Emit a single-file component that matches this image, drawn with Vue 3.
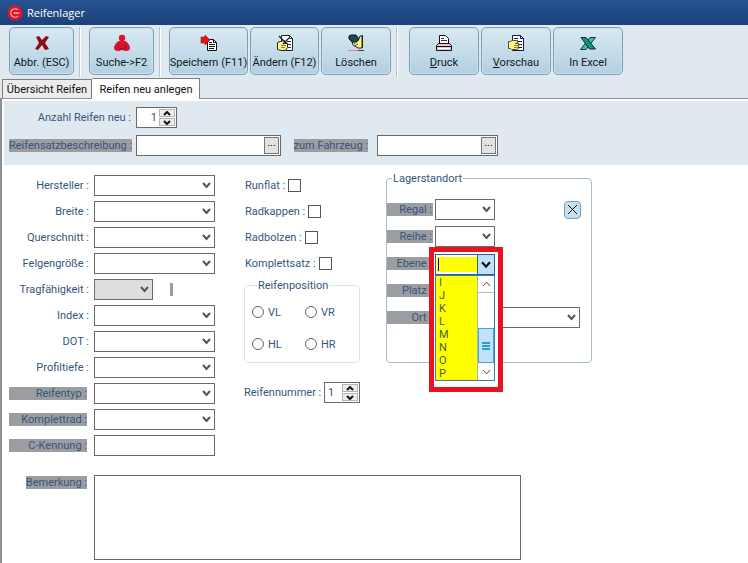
<script setup>
import { ref } from 'vue'

const specs = [
  { id: 'hersteller', label: 'Hersteller :' },
  { id: 'breite', label: 'Breite :' },
  { id: 'querschnitt', label: 'Querschnitt :' },
  { id: 'felge', label: 'Felgengröße :' },
  { id: 'tragfaehigkeit', label: 'Tragfähigkeit :', disabled: true },
  { id: 'index', label: 'Index :' },
  { id: 'dot', label: 'DOT :' },
  { id: 'profil', label: 'Profiltiefe :' },
  { id: 'typ', label: 'Reifentyp :', marked: true },
  { id: 'rad', label: 'Komplettrad :', marked: true },
  { id: 'kennung', label: 'C-Kennung :', marked: true, text: true },
]
const checks = [
  { id: 'runflat', label: 'Runflat :' },
  { id: 'kappen', label: 'Radkappen :' },
  { id: 'bolzen', label: 'Radbolzen :' },
  { id: 'satz', label: 'Komplettsatz :' },
]
const positions = ['VL', 'VR', 'HL', 'HR']
const levels = ['I', 'J', 'K', 'L', 'M', 'N', 'O', 'P']
const count = ref(1)
const tyre = ref(1)
const level = ref('')
</script>

<template>
  <div class="window">
    <header class="titlebar">
      <svg class="logo" width="16" height="16" viewBox="0 0 16 16">
        <circle cx="8" cy="8" r="7.6" fill="#e3122b" />
        <path d="M10.800 4.800A4.200 4.200 0 1 0 11 11M6.500 8h6.200" fill="none" stroke="#f7b5b5" stroke-width="1.300" />
      </svg>
      <h1>Reifenlager</h1>
    </header>

    <nav class="toolbar">
      <button class="tool small" type="button">
        <svg width="20" height="20" viewBox="0 0 20 20">
          <path d="M4 4l3-1 3 4 4-4 3 1-4 6 4 6-4 1-3-5-4 5-3-1 4-6z" fill="#8c0d14" />
        </svg>
        <span>Abbr. (ESC)</span>
      </button>
      <i class="rule"></i>
      <button class="tool small" type="button">
        <svg width="20" height="20" viewBox="0 0 20 20">
          <circle cx="10" cy="5" r="3.200" fill="#d9142b" />
          <path d="M7 8h6c3 1 5 5 5 7 0 3-4 4-8 2-4 2-8 1-8-2 0-2 2-6 5-7z" fill="#d9142b" />
          <path d="M6 12v2.500l4 1.500 4-1.500V12" fill="none" stroke="#7e1628" stroke-width="1" />
        </svg>
        <span>Suche-&gt;F2</span>
      </button>
      <i class="rule"></i>
      <div class="group">
        <button class="tool wide" type="button">
          <svg width="20" height="20" viewBox="0 0 20 20">
            <path d="M8.500 6.500h6l3 3v8h-9z" fill="#fff" stroke="#111" />
            <path d="M14.500 6.500v3h3M10 9.500h3M10 11.500h6M10 13.500h6M10 15.500h5" fill="none" stroke="#111" />
            <path d="M2 4h4V2l5 5-5 5v-2H2z" fill="#ee1010" stroke="#8e1010" stroke-width=".6" />
          </svg>
          <span>Speichern (F11)</span>
        </button>
        <button class="tool mid" type="button">
          <svg width="20" height="20" viewBox="0 0 20 20">
            <path d="M6.500 2.500h8l3 3v12h-11z" fill="#fff" stroke="#222" />
            <path d="M14.500 2.500v3h3M12 8.500h4M13 11.500h3M13 14.500h3" fill="none" stroke="#333" />
            <path d="M2.500 9.500l3-1 4-1 2 2-2 1h3v4l-2 3h-4l-4-1z" fill="#fbf58c" stroke="#222" />
            <path d="M4 3l7 7M14 5l-6 6" stroke="#222" stroke-width="1.400" />
            <path d="M6 12.500h5M6 14.500h4" stroke="#8b8529" />
          </svg>
          <span>Ändern (F12)</span>
        </button>
        <button class="tool norm" type="button">
          <svg width="20" height="20" viewBox="0 0 20 20">
            <path d="M6 9l6-1 2-5h2v12h-4l-5-3z" fill="#fbf58c" stroke="#222" />
            <path d="M3 3l2-1h5l3 4-4 3H6L3 6z" fill="#174e55" stroke="#111" />
            <path d="M8 11l3-2M9 13l3-2" stroke="#555" />
            <path d="M16.500 2v13" stroke="#222" />
            <path d="M2 17.500h10" stroke="#d48a91" />
            <path d="M12 17.500h6" stroke="#444" />
          </svg>
          <span>Löschen</span>
        </button>
      </div>
      <i class="rule"></i>
      <div class="group last">
        <button class="tool norm" type="button">
          <svg width="20" height="20" viewBox="0 0 20 20">
            <path d="M5.500 10.500v-8h6l3 3v5z" fill="#fff" stroke="#111" />
            <path d="M7 5.500h3M7 7.500h6" stroke="#333" />
            <path d="M4.500 10.500h11l2 2v5h-15v-5z" fill="#e7c6cf" stroke="#111" />
            <path d="M3 13.500h14" stroke="#111" /><path d="M4 15.500h12" stroke="#fff" />
          </svg>
          <span><u>D</u>ruck</span>
        </button>
        <button class="tool norm" type="button">
          <svg width="20" height="20" viewBox="0 0 20 20">
            <path d="M6.500 2.500h8l3 3v12h-11z" fill="#fff" stroke="#15155e" />
            <path d="M14.500 2.500v3h3M8 5.500h4M12 8.500h4M13 11.500h3M13 14.500h3" fill="none" stroke="#15155e" />
            <path d="M2.500 8.500h2l2-1h5v2l-2 1h3v5l-2 1h-5l-1-1h-2z" fill="#fbf58c" stroke="#55501c" />
            <path d="M8 12.500h4M8 14.500h4" stroke="#8b8529" />
          </svg>
          <span><u>V</u>orschau</span>
        </button>
        <button class="tool norm" type="button">
          <svg width="20" height="20" viewBox="0 0 20 20">
            <path d="M12 4.500h5.500L8 16.500H2.500z" fill="#35c3a4" stroke="#0c3b3d" />
            <path d="M3 4.500h5l9.500 11.500h-6z" fill="#1a8f80" stroke="#0c2f33" />
          </svg>
          <span>In Excel</span>
        </button>
      </div>
    </nav>

    <div class="tabs" role="tablist">
      <button class="tab" type="button" role="tab">Übersicht Reifen</button>
      <button class="tab active" type="button" role="tab" aria-selected="true">Reifen neu anlegen</button>
    </div>

    <main class="pane">
      <section class="top">
        <label for="anzahl">Anzahl Reifen neu :</label>
        <div class="spin">
          <input id="anzahl" v-model="count" type="text" class="right" />
          <div class="arrows">
            <button type="button" aria-label="mehr"><svg width="8" height="5" viewBox="0 0 8 5"><path d="M1 4l3-3 3 3" /></svg></button>
            <button type="button" aria-label="weniger"><svg width="8" height="5" viewBox="0 0 8 5"><path d="M1 1l3 3 3-3" /></svg></button>
          </div>
        </div>
        <label for="beschreibung" class="second"><span class="mark">Reifensatzbeschreibung :</span></label>
        <div class="picker">
          <input id="beschreibung" type="text" />
          <button type="button" aria-label="Beschreibung wählen">...</button>
        </div>
        <label for="fahrzeug" class="vehicle"><span class="mark">zum Fahrzeug :</span></label>
        <div class="picker">
          <input id="fahrzeug" type="text" />
          <button type="button" aria-label="Fahrzeug wählen">...</button>
        </div>
      </section>

      <div class="columns">
        <section class="specs">
          <template v-for="s in specs" :key="s.id">
            <label :for="s.id" :class="{ mark: s.marked }">{{ s.label }}</label>
            <input v-if="s.text" :id="s.id" type="text" class="box" />
            <div v-else-if="s.disabled" class="load">
              <span class="combo short">
                <select :id="s.id" disabled></select>
                <svg width="9" height="7" viewBox="0 0 9 7"><path d="M1 1l3.500 4L8 1" /></svg>
              </span>
              <i class="tick"></i>
            </div>
            <span v-else class="combo">
              <select :id="s.id"></select>
              <svg width="9" height="7" viewBox="0 0 9 7"><path d="M1 1l3.500 4L8 1" /></svg>
            </span>
          </template>
        </section>

        <section class="middle">
          <div v-for="c in checks" :key="c.id" class="check">
            <label :for="c.id">{{ c.label }}</label>
            <input :id="c.id" type="checkbox" />
          </div>
          <fieldset class="position">
            <legend>Reifenposition</legend>
            <label v-for="p in positions" :key="p"><input type="radio" name="position" :value="p" />{{ p }}</label>
          </fieldset>
          <div class="number">
            <label for="nummer">Reifennummer :</label>
            <div class="spin narrow">
              <input id="nummer" v-model="tyre" type="text" />
              <div class="arrows">
                <button type="button" aria-label="mehr"><svg width="8" height="5" viewBox="0 0 8 5"><path d="M1 4l3-3 3 3" /></svg></button>
                <button type="button" aria-label="weniger"><svg width="8" height="5" viewBox="0 0 8 5"><path d="M1 1l3 3 3-3" /></svg></button>
              </div>
            </div>
          </div>
        </section>

        <fieldset class="storage">
          <legend>Lagerstandort</legend>
          <label class="mark" for="regal">Regal :</label>
          <span class="combo">
            <select id="regal"></select>
            <svg width="9" height="7" viewBox="0 0 9 7"><path d="M1 1l3.500 4L8 1" /></svg>
          </span>
          <button class="clear" type="button" aria-label="Lagerstandort leeren">
            <svg width="11" height="11" viewBox="0 0 11 11"><path d="M1 1l9 9M10 1l-9 9" /></svg>
          </button>
          <label class="mark" for="reihe">Reihe :</label>
          <span class="combo">
            <select id="reihe"></select>
            <svg width="9" height="7" viewBox="0 0 9 7"><path d="M1 1l3.500 4L8 1" /></svg>
          </span>
          <label class="mark" for="ebene">Ebene :</label>
          <div class="level">
            <div class="popup">
              <div class="entry">
                <input id="ebene" v-model="level" type="text" role="combobox" aria-expanded="true" />
                <i class="caret"></i>
                <button type="button" aria-label="Liste öffnen">
                  <svg width="10" height="8" viewBox="0 0 9 7"><path d="M1 1l3.500 4L8 1" /></svg>
                </button>
              </div>
              <div class="list">
                <ul role="listbox">
                  <li v-for="l in levels" :key="l" role="option" @click="level = l">{{ l }}</li>
                </ul>
                <div class="scroll">
                  <button type="button" aria-label="nach oben"><svg width="9" height="6" viewBox="0 0 9 6"><path d="M1 5l3.500-4L8 5" /></svg></button>
                  <div class="thumb"><i></i><i></i><i></i></div>
                  <button type="button" aria-label="nach unten"><svg width="9" height="6" viewBox="0 0 9 6"><path d="M1 1l3.500 4L8 1" /></svg></button>
                </div>
              </div>
            </div>
          </div>
          <label class="mark" for="platz">Platz :</label>
          <span class="combo">
            <select id="platz"></select>
            <svg width="9" height="7" viewBox="0 0 9 7"><path d="M1 1l3.500 4L8 1" /></svg>
          </span>
          <label class="mark" for="ort">Ort :</label>
          <span class="combo place">
            <select id="ort"></select>
            <svg width="9" height="7" viewBox="0 0 9 7"><path d="M1 1l3.500 4L8 1" /></svg>
          </span>
        </fieldset>
      </div>

      <section class="notes">
        <label for="bemerkung"><span class="mark">Bemerkung :</span></label>
        <textarea id="bemerkung"></textarea>
      </section>
    </main>
  </div>
</template>

<style>
body {
  margin: 0;
  background: #fff;
}
</style>

<style scoped>
* {
  box-sizing: border-box;
}
.window {
  min-height: 100vh;
  display: flex;
  flex-direction: column;
  font: 11px/13px Roboto, "Liberation Sans", sans-serif;
  color: #35567c;
  background: #e0e9f0;
}
button,
input,
select,
textarea {
  margin: 0;
  padding: 0;
  font: inherit;
  color: inherit;
  border-radius: 0;
  appearance: none;
  outline: none;
}
svg {
  fill: none;
  stroke-width: 2;
}
.titlebar {
  display: flex;
  align-items: center;
  gap: 4px;
  height: 25px;
  padding-left: 7px;
  background: linear-gradient(#265391, #1c4179);
  color: #fff;
}
.titlebar h1 {
  margin: 0;
  font: 11px/16px "Open Sans", "Noto Sans", sans-serif;
}
.toolbar {
  display: flex;
  gap: 5px;
  padding: 2px 9px 0;
  height: 52px;
}
.group {
  display: flex;
  gap: 2px;
}
.group.last {
  margin-left: 3px;
}
.rule {
  width: 2px;
  margin-right: 3px;
  background: linear-gradient(90deg, #b9c4cd 50%, #fff 50%);
}
.tool {
  display: flex;
  flex-direction: column;
  align-items: center;
  justify-content: center;
  gap: 3px;
  height: 48px;
  border: 1px solid #7a9db8;
  border-radius: 5px;
  background: linear-gradient(#d9e9f3, #c5dcea 50%, #b1d0e2);
  box-shadow: inset 0 0 0 1px #cfe2ee;
  color: #101820;
  white-space: nowrap;
}
.tool svg {
  stroke-width: 1;
}
.small {
  width: 65px;
}
.wide {
  width: 79px;
}
.mid {
  width: 69px;
}
.norm {
  width: 70px;
}
.tabs {
  display: flex;
  align-items: flex-end;
  height: 21px;
  padding-left: 2px;
}
.tab {
  height: 19px;
  width: 90px;
  border: 1px solid #7d7d7d;
  border-bottom: 0;
  background: #ececec;
  color: #111;
  white-space: nowrap;
}
.tab.active {
  width: 108px;
  height: 21px;
  border-left-color: #fff;
  background: #fff;
  margin-bottom: -1px;
  z-index: 1;
}
.pane {
  flex: 1;
  border-left: 2px solid #8d9196;
  border-top: 1px solid #8d9196;
  padding: 2px 0 3px 2px;
  background: #fff;
}
.top {
  display: grid;
  grid-template-columns: 127px 145px 96px 121px;
  grid-template-rows: 21px 21px;
  row-gap: 7px;
  align-items: center;
  padding: 6px 0 9px 5px;
  background: #e0e9f0;
}
.top label {
  padding-right: 5px;
  text-align: right;
  white-space: nowrap;
}
.top label.second {
  padding-right: 7px;
}
.top label.vehicle {
  padding-right: 9px;
}
.mark {
  background: #9b9da1;
}
.top .spin {
  grid-column: 2 / 5;
}
.spin,
.picker {
  display: flex;
  height: 21px;
  border: 1px solid #6a6a6a;
  background: #fff;
}
.spin {
  width: 41px;
  padding: 1px;
}
.spin input,
.picker input {
  flex: 1;
  min-width: 0;
  border: 0;
  background: transparent;
}
.spin .right {
  text-align: right;
  padding-right: 2px;
}
.narrow {
  width: 36px;
}
.narrow input {
  padding-left: 2px;
}
.arrows {
  display: grid;
  width: 16px;
  gap: 1px;
}
.arrows button {
  display: grid;
  place-items: center;
  border: 1px solid #b4b4b4;
  background: #ececec;
  stroke: #111;
}
.picker {
  padding: 1px;
}
.picker button {
  width: 15px;
  padding-bottom: 5px;
  border: 1px solid #777;
  background: #e2e2e2;
  color: #111;
  line-height: 10px;
}
.columns {
  display: flex;
  align-items: flex-start;
  padding: 10px 0 0 5px;
}
.specs {
  display: grid;
  grid-template-columns: 80px 121px;
  column-gap: 5px;
  row-gap: 5px;
  align-items: center;
}
.specs label {
  text-align: right;
  white-space: nowrap;
}
.specs .mark {
  margin-right: 2px;
}
.box {
  height: 21px;
  border: 1px solid #6a6a6a;
}
.combo {
  display: grid;
  grid-template-columns: 1fr 13px;
  align-items: center;
  stroke: #555;
}
.combo select {
  grid-area: 1 / 1 / 2 / 3;
  width: 100%;
  height: 21px;
  border: 1px solid #6a6a6a;
  background: #fff;
}
.combo select:disabled {
  background: #dedede;
  opacity: 1;
}
.combo svg {
  grid-area: 1 / 2;
  pointer-events: none;
  z-index: 1;
}
.load {
  display: flex;
  align-items: center;
  gap: 17px;
}
.short {
  width: 59px;
}
.tick {
  width: 3px;
  height: 13px;
  background: #9b9da1;
}
.middle {
  width: 116px;
  margin: 0 26px 0 29px;
}
.check {
  display: flex;
  align-items: center;
  gap: 3px;
  height: 21px;
  margin-bottom: 5px;
  padding-left: 1px;
}
.check input {
  width: 13px;
  height: 13px;
  border: 1px solid #555;
  background: #fff;
}
.check input:checked {
  background: #35567c;
}
fieldset {
  min-width: 0;
  margin: 0;
  padding: 0;
  border: 1px solid #dde2e6;
  border-radius: 4px;
}
legend {
  padding: 0 1px;
  margin-left: 5px;
}
.position {
  display: grid;
  grid-template-columns: 53px 1fr;
  grid-template-rows: 32px 32px;
  padding: 4px 0 2px 7px;
}
.position label {
  display: flex;
  align-items: center;
  gap: 4px;
}
.position input {
  width: 12px;
  height: 12px;
  border: 1px solid #666;
  border-radius: 50%;
  background: #fff;
}
.position input:checked {
  background: #35567c;
}
.number {
  display: flex;
  align-items: center;
  justify-content: space-between;
  margin-top: 19px;
  white-space: nowrap;
}
.storage {
  display: grid;
  grid-template-columns: 46px 60px 1fr;
  column-gap: 2px;
  row-gap: 6px;
  align-items: center;
  width: 206px;
  margin-top: -3px;
  padding: 14px 10px 34px 0;
  border-color: #a5bccb;
}
.storage .mark {
  grid-column: 1;
  padding-right: 1px;
  text-align: right;
  white-space: nowrap;
}
.storage .place {
  grid-column: 2 / 4;
  margin-right: 1px;
}
.clear {
  display: grid;
  place-items: center;
  justify-self: end;
  width: 17px;
  height: 18px;
  border: 1px solid #7a9db8;
  border-radius: 4px;
  background: #c9dfec;
  stroke: #111;
}
.clear svg {
  stroke-width: 1;
}
.level {
  position: relative;
  height: 21px;
}
.popup {
  position: absolute;
  z-index: 2;
  left: -6px;
  top: -6px;
  width: 74px;
  padding: 2px 3px 6px 1px;
  border: 5px solid #e8131f;
  background: #fff;
}
.entry {
  display: grid;
  grid-template-columns: 1fr 17px;
  align-items: stretch;
  height: 21px;
  border: 1px solid #2d5c91;
}
.entry input {
  grid-area: 1 / 1;
  min-width: 0;
  margin: 2px 0 2px 1px;
  border: 0;
  background: #ff0;
}
.caret {
  grid-area: 1 / 1;
  width: 1px;
  margin: 3px 2px;
  background: #111;
}
.entry button {
  display: grid;
  place-items: center;
  border: 0;
  border-left: 1px solid #2d5c91;
  background: #bfe0f7;
  stroke: #111;
}
.list {
  display: flex;
  border: 1px solid #3a7fa6;
}
.list ul {
  flex: 1;
  margin: 0;
  padding: 0 0 0 3px;
  list-style: none;
  background: #ff0;
  color: #4d5a48;
}
.scroll {
  display: flex;
  flex-direction: column;
  width: 17px;
  border-left: 1px solid #a9b9c0;
}
.scroll button {
  display: grid;
  place-items: center;
  height: 17px;
  border: 0;
  border-bottom: 1px solid #bbb;
  background: #fff;
  stroke: #555;
}
.scroll button:last-child {
  border: 0;
}
.scroll svg {
  stroke-width: 1;
}
.thumb {
  display: flex;
  flex-direction: column;
  align-items: center;
  justify-content: center;
  gap: 1px;
  height: 35px;
  margin-top: auto;
  border: 1px solid #4ba3cf;
  background: #c0e2fa;
}
.thumb i {
  width: 8px;
  height: 2px;
  background: #2aa0bd;
}
.notes {
  display: grid;
  grid-template-columns: 80px minmax(0, 427px);
  column-gap: 5px;
  padding: 19px 0 0 5px;
}
.notes label {
  padding: 1px 2px 0 0;
  text-align: right;
  white-space: nowrap;
}
.notes textarea {
  height: 85px;
  border: 1px solid #6a6a6a;
  resize: none;
}
</style>
